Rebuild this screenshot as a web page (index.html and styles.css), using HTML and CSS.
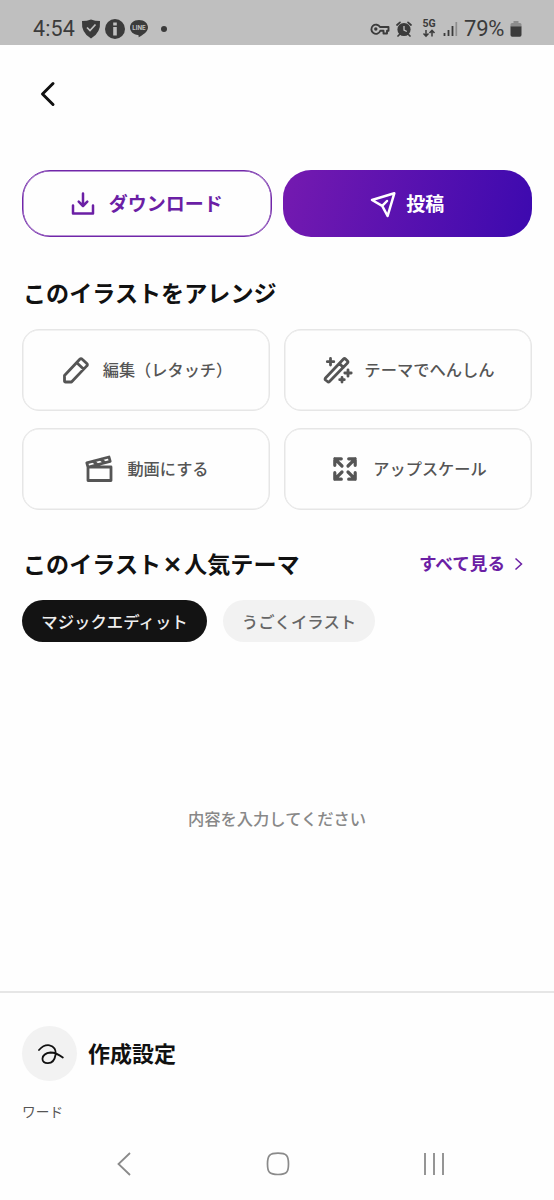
FILE: index.html
```html
<!DOCTYPE html>
<html lang="ja">
<head>
<meta charset="utf-8">
<title>作成設定</title>
<link rel="stylesheet" href="styles.css">
</head>
<body>
<header class="status">
  <span class="clock">4:54</span>
  <svg class="shield" width="20" height="20" viewBox="0 0 20 20"><path d="M10 0.5Q14 2 19 2Q20 14 10 19.5Q0 14 1 2Q6 2 10 .5Z" fill="#3b3b3b"/><path d="M6 8.500l3 3 5.500-6" fill="none" stroke="#c0c0c0" stroke-width="1.700"/></svg>
  <svg class="info" width="20" height="20" viewBox="0 0 20 20"><circle cx="10" cy="10" r="10" fill="#3b3b3b"/><path d="M8.200 3.500h3.600v3H8.200zM8.200 8h3.600v8.500H8.200z" fill="#c0c0c0"/></svg>
  <svg class="line" width="20" height="20" viewBox="0 0 20 20"><path d="M10 1C4.500 1 1 4.500 1 8.500c0 4.200 3.500 7 8 7.500.8.200.7 1 .6 2.200 4-2 9.400-5.500 9.400-9.700C19 4.500 15.500 1 10 1z" fill="#3b3b3b"/><text class="line-text" x="10" y="10.500" text-anchor="middle">LINE</text></svg>
  <span class="dot"></span>
  <span class="spacer"></span>
  <svg class="key" width="20" height="14" viewBox="0 0 20 14"><path d="M10 5h8.500v3.800H17v2.700h-3.500V8.800H10.300A4.600 4.600 0 1 1 10 5z" fill="none" stroke="#3b3b3b" stroke-width="1.900" stroke-linejoin="round"/><circle cx="5.800" cy="7" r="1.700" fill="#3b3b3b"/></svg>
  <svg class="alarm" width="16" height="16" viewBox="0 0 16 16"><circle cx="8" cy="8.500" r="6.600" fill="#3b3b3b"/><path d="M1 4l3-2.700M15 4l-3-2.700M3.500 13.500L2 15M12.500 13.500L14 15" stroke="#3b3b3b" stroke-width="1.700" stroke-linecap="round"/><path d="M8 5v4l2.800 1.500" fill="none" stroke="#c0c0c0" stroke-width="1.300"/></svg>
  <svg class="network" width="16" height="23" viewBox="-1 -2 16 23"><text class="network-text" x="7" y="8" text-anchor="middle">5G</text><path d="M4 11v6M1.500 14.500L4 17.200 6.500 14.500M10 17.500v-6M7.500 14L10 11.300l2.500 2.700" fill="none" stroke="#3b3b3b" stroke-width="1.500"/></svg>
  <svg class="signal" width="15" height="16" viewBox="0 0 15 16"><path d="M1.500 12v3M5.500 9v6M9.500 5v10" stroke="#3b3b3b" stroke-width="1.800"/><path d="M13.300 1v14" stroke="#8d8d8d" stroke-width="1.700"/></svg>
  <span class="percent">79%</span>
  <svg class="battery" width="12" height="16" viewBox="0 0 12 16"><path d="M3.500 0h5v2H10q1.500 0 1.500 1.500V6H.5V3.500Q.5 2 2 2h1.500z" fill="#8d8d8d"/><path d="M.5 5.500h11V14q0 1.700-1.700 1.700H2.200Q.5 15.700.5 14z" fill="#3b3b3b"/></svg>
</header>
<nav class="topbar">
  <svg width="20" height="28" viewBox="0 0 20 28"><path d="M15 3.500L4.500 14 15 24.500" fill="none" stroke="#111" stroke-width="3" stroke-linecap="round" stroke-linejoin="round"/></svg>
</nav>
<main class="content">
  <div class="actions">
    <button class="action download">
      <svg width="24" height="24" viewBox="0 0 24 24" fill="none" stroke="currentColor" stroke-width="2.500" stroke-linecap="round" stroke-linejoin="round"><path d="M12 1.500v12M7.700 9.700L12 14l4.300-4.300M2 13.500v8h20v-8"/></svg>
      <span>ダウンロード</span>
    </button>
    <button class="action post">
      <svg width="26" height="28" viewBox="0 0 26 28" fill="none" stroke="currentColor" stroke-width="2.500" stroke-linecap="round" stroke-linejoin="round"><path d="M2 10L24.300 3.300 17.600 26 12.200 15.900zM12.200 15.900L17 11"/></svg>
      <span>投稿</span>
    </button>
  </div>
  <h2 class="heading">このイラストをアレンジ</h2>
  <div class="cards">
    <button class="card edit">
      <svg width="28" height="28" viewBox="0 0 28 28" fill="none" stroke="currentColor" stroke-width="2.800" stroke-linejoin="round" stroke-linecap="round"><path d="M2.500 19.500L17.800 3.200q1.200-1.200 2.400 0l4.600 4.300q1.200 1.200 0 2.400L9.500 26h-6q-1 0-1-1zM14.800 6.700l6.700 6.300"/></svg>
      <span>編集（レタッチ）</span>
    </button>
    <button class="card theme">
      <svg width="30" height="28" viewBox="0 0 30 28" fill="none" stroke="currentColor" stroke-width="2.800" stroke-linejoin="round" stroke-linecap="round"><path d="M2.500 22L20.500 3q1-1 2 0l2 2q1 1 0 2L6.500 25.500q-1 1-2 0l-2-1.500q-.8-.7 0-2zM16.500 7.500l3.800 4"/><path d="M7.500 2.500v6.500M4.300 5.700h6.500M25 13.800v6.400M21.800 17h6.400M19 21.500v4.500M16.700 23.700h4.600"/></svg>
      <span>テーマでへんしん</span>
    </button>
    <button class="card movie">
      <svg width="28" height="28" viewBox="0 0 28 28"><path d="M3 12h23v13.500H3zM3 12L1.800 7.900 24 2l1.200 4.400L3.500 12" fill="none" stroke="currentColor" stroke-width="2.800" stroke-linejoin="round"/><path d="M8 6l4.500 3.800M15.500 4l4.500 3.800" stroke="currentColor" stroke-width="3"/></svg>
      <span>動画にする</span>
    </button>
    <button class="card upscale">
      <svg width="26" height="26" viewBox="0 0 26 26" fill="none" stroke="currentColor" stroke-width="3.200" stroke-linecap="round" stroke-linejoin="round"><path d="M2.800 9.300V2.800H9.300M2.800 2.800L10 10M16.700 2.800h6.500V9.300M23.200 2.800L16 10M2.800 16.700v6.500H9.300M2.800 23.200L10 16M23.200 16.700v6.500H16.700M23.200 23.200L16 16"/></svg>
      <span>アップスケール</span>
    </button>
  </div>
  <div class="section-head">
    <h2 class="heading">このイラスト<span class="times">×</span>人気テーマ</h2>
    <a class="see-all">すべて見る<svg width="9" height="14" viewBox="0 0 9 14"><path d="M1.500 1.500L7.500 7l-6 5.500" fill="none" stroke="currentColor" stroke-width="1.500"/></svg></a>
  </div>
  <div class="chips">
    <button class="chip selected">マジックエディット</button>
    <button class="chip">うごくイラスト</button>
  </div>
  <div class="empty">内容を入力してください</div>
</main>
<section class="settings">
  <div class="settings-head">
    <span class="avatar"><svg width="28" height="24" viewBox="0 0 28 24"><path d="M3 8C6.500 4 10 2.800 13.500 3.300C18 4 20.300 8 19.500 13C18.700 18 16 21 12 21.200C8.500 21.400 6.300 19.500 6.500 16.500C6.900 13 10 11 14.500 10.500C19.500 10.500 23.500 13 26.800 15.500" fill="none" stroke="#111" stroke-width="1.800" stroke-linecap="round"/></svg></span>
    <h3>作成設定</h3>
  </div>
  <div class="word">ワード</div>
</section>
<footer class="navigation">
  <svg width="16" height="26" viewBox="0 0 16 26"><path d="M14 2L2.500 13 14 24" fill="none" stroke="#8a8a8a" stroke-width="1.800"/></svg>
  <svg width="24" height="24" viewBox="0 0 24 24"><path d="M12 1.200C20.500 1.200 22.500 3.500 22.500 12S20.500 22.500 12 22.500 1.500 20.500 1.500 12 3.500 1.200 12 1.200z" fill="none" stroke="#8a8a8a" stroke-width="1.700"/></svg>
  <svg width="22" height="22" viewBox="0 0 22 22"><path d="M2 0v22M11 0v22M20 0v22" stroke="#8a8a8a" stroke-width="1.800"/></svg>
</footer>
</body>
</html>
```

FILE: styles.css
```css
* { box-sizing: border-box; }
body {
  display: flex;
  flex-direction: column;
  width: 554px;
  height: 1200px;
  margin: 0;
  overflow: hidden;
  background: #fefefe;
  color: #111;
  font-family: "Noto Sans CJK JP", sans-serif;
}
svg { display: block; flex: none; }
h2, h3 { margin: 0; }
button { padding: 0; border: 0; font: inherit; white-space: nowrap; }
.status {
  display: flex;
  align-items: center;
  height: 45px;
  padding: 12px 32px 0 33px;
  background: #bfbfbf;
  color: #3b3b3b;
  font-family: Inter, sans-serif;
}
.clock { width: 48px; font: 21.500px/22px Roboto, sans-serif; letter-spacing: .1px; }
.info { margin-left: 4px; }
.line { margin-left: 4px; }
.line-text { fill: #c0c0c0; font: bold 6px Inter, sans-serif; }
.dot { width: 6px; height: 6px; margin-left: 12px; border-radius: 50%; background: #3b3b3b; }
.spacer { flex: 1; }
.alarm { margin-left: 6px; }
.network { margin-left: 9px; }
.network-text { fill: #3b3b3b; font: bold 10.500px Roboto, sans-serif; }
.signal { margin-left: 6px; }
.percent { width: 46px; margin-left: 6px; font: 22px/22px Roboto, sans-serif; letter-spacing: -.2px; }
.battery { width: 12px; }
.topbar { height: 125px; padding: 35px 38px; }
.content { display: flex; flex-direction: column; height: 821px; padding: 0 22px; }
.actions { display: grid; grid-template-columns: 1fr 1fr; gap: 11px; height: 67px; }
.action {
  display: flex;
  align-items: center;
  justify-content: center;
  border-radius: 28px;
  font-size: 19px;
  font-weight: 700;
}
.action span, .card span { margin-top: -2px; }
.download { gap: 14px; border: 1px solid #7127a9; box-shadow: inset 0 0 0 .5px #7127a9; background: #fefefe; color: #6b1fa5; }
.post { gap: 10px; background: linear-gradient(105deg, #751ab0, #3c09af); color: #fff; }
.heading { font-size: 23.100px; line-height: 34px; font-weight: 700; white-space: nowrap; }
.times { display: inline-block; width: 23px; font-size: 23px; line-height: 20px; text-align: center; transform: scale(.85); -webkit-text-stroke: 1.100px #111; }
.actions + .heading { margin: 38px 0 20px 1px; }
.cards { display: grid; grid-template-columns: 1fr 1fr; gap: 17px 14px; grid-auto-rows: 82px; }
.card {
  display: flex;
  align-items: center;
  justify-content: center;
  padding-left: 2px;
  border: 1px solid #e6e6e6;
  border-radius: 17px;
  box-shadow: inset 0 0 0 .5px #e6e6e6;
  background: #fefefe;
  color: #555;
  font-size: 16.200px;
  font-weight: 500;
  gap: 14px;
}
.edit { gap: 13px; }
.theme { gap: 11px; font-size: 16.300px; }
.upscale { gap: 15px; padding-left: 3px; }
.section-head { display: flex; align-items: center; justify-content: space-between; height: 34px; margin: 36px 9px 0 1px; }
.see-all { display: flex; align-items: center; gap: 9px; margin-top: -2px; color: #6b1fa5; font-size: 17.600px; font-weight: 700; }
.see-all svg { margin-top: 3px; }
.chips { display: flex; gap: 16px; margin-top: 20px; }
.chip { width: 152px; height: 42px; border-radius: 21px; background: #f2f2f2; color: #666; font-size: 16.400px; font-weight: 500; }
.selected { width: 185px; background: #131313; color: #eee; }
.empty { margin-top: 164px; color: #888; font-size: 16.300px; line-height: 24px; font-weight: 500; text-align: center; }
.settings { height: 138px; padding: 33px 22px 0; border-top: 2px solid #e6e6e6; }
.settings-head { display: flex; align-items: center; gap: 11px; }
.avatar { display: grid; place-items: center; width: 55px; height: 55px; border-radius: 50%; background: #f2f2f2; }
.settings h3 { margin-top: -4px; font-size: 22px; line-height: 32px; }
.word { margin-top: 20px; color: #555; font-size: 13.700px; line-height: 20px; }
.navigation { display: flex; align-items: center; justify-content: space-between; height: 71px; padding: 0 109px 2px 116px; }
```
